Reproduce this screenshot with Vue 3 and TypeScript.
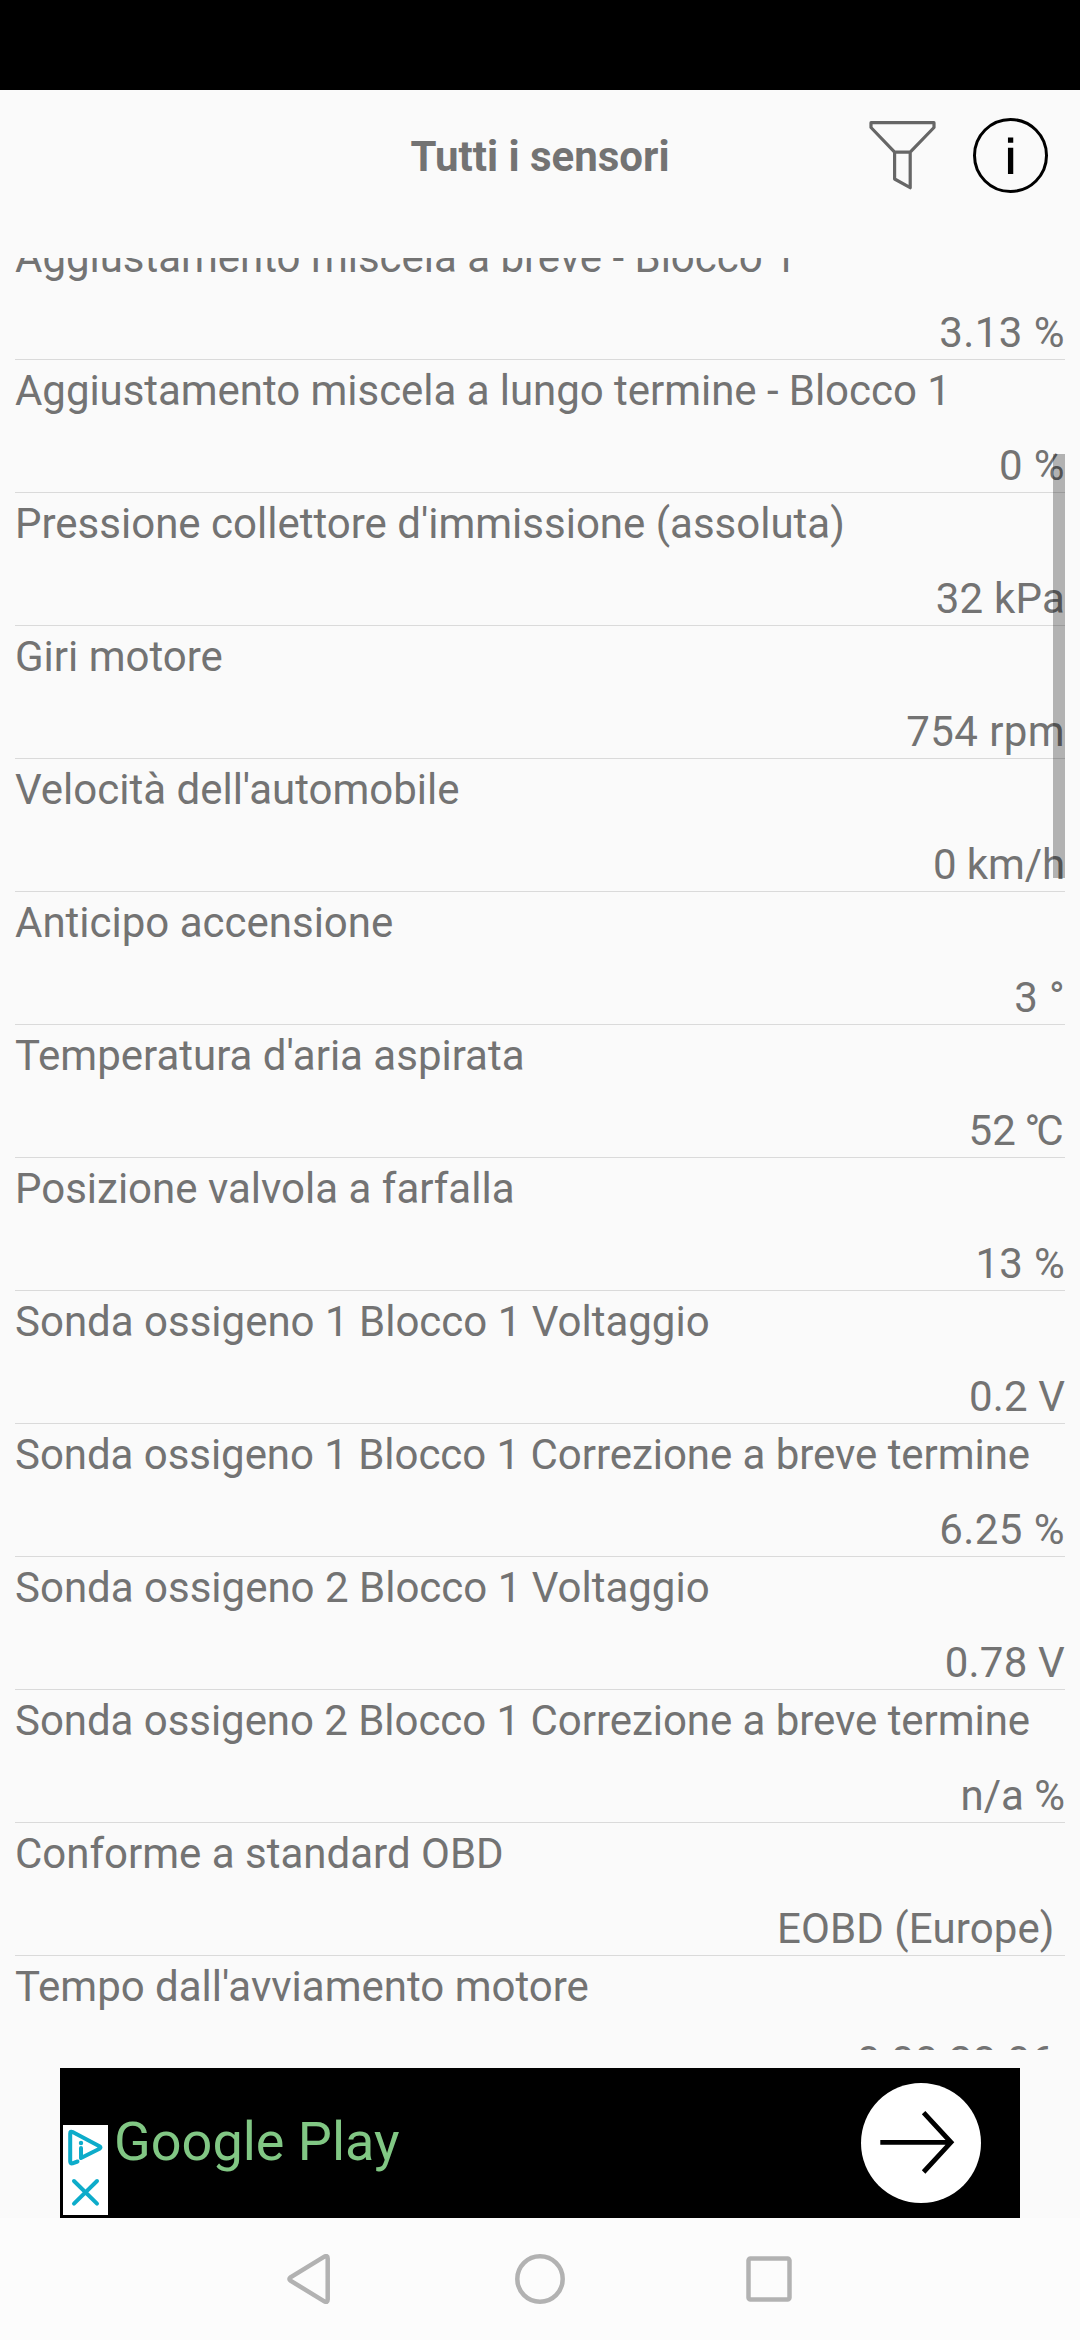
<script setup lang="ts">
interface Sensor {
  name: string
  value: string
  unit?: 'celsius'
  nameTracking?: number
  valueTracking?: number
}

const sensors: Sensor[] = [
  { name: 'Aggiustamento miscela a breve - Blocco 1', value: '3.13 %', nameTracking: -0.02, valueTracking: 0.45 },
  { name: 'Aggiustamento miscela a lungo termine - Blocco 1', value: '0 %', nameTracking: -0.045, valueTracking: 0.4 },
  { name: "Pressione collettore d'immissione (assoluta)", value: '32 kPa', valueTracking: 0.2 },
  { name: 'Giri motore', value: '754 rpm', valueTracking: 0.4 },
  { name: "Velocità dell'automobile", value: '0 km/h', valueTracking: -0.1 },
  { name: 'Anticipo accensione', value: '3 °', valueTracking: 0.35 },
  { name: "Temperatura d'aria aspirata", value: '52 ', unit: 'celsius' },
  { name: 'Posizione valvola a farfalla', value: '13 %', valueTracking: 0.3 },
  { name: 'Sonda ossigeno 1 Blocco 1 Voltaggio', value: '0.2 V', valueTracking: 0.1 },
  { name: 'Sonda ossigeno 1 Blocco 1 Correzione a breve termine', value: '6.25 %', nameTracking: -0.045, valueTracking: 0.45 },
  { name: 'Sonda ossigeno 2 Blocco 1 Voltaggio', value: '0.78 V', valueTracking: 0.2 },
  { name: 'Sonda ossigeno 2 Blocco 1 Correzione a breve termine', value: 'n/a %', nameTracking: -0.045 },
  { name: 'Conforme a standard OBD', value: 'EOBD (Europe) ', valueTracking: 0.1 },
  { name: "Tempo dall'avviamento motore", value: '0:00:28:06 ', valueTracking: 0.2 },
]

const tracking = (px = 0) => ({ letterSpacing: `${px}px` })
</script>

<template>
  <div class="screen">
    <div class="status-bar"></div>
    <header class="header">
      <span></span>
      <h1 class="title">Tutti i sensori</h1>
      <div class="actions">
        <svg class="filter" width="72" height="72" viewBox="0 0 72 72">
          <path d="M4 4.7H67V9.5L43.2 34.2H27.6L4 9.5ZM27.6 34.2V61L43.2 69.7V34.2" />
        </svg>
        <svg class="info" width="76" height="76" viewBox="0 0 76 76">
          <circle cx="38.5" cy="37.5" r="36" />
          <path d="M38.6 29.7V56M38.6 19.5V24.7" />
        </svg>
      </div>
    </header>

    <main class="list">
      <div class="rows">
        <div v-for="s in sensors" :key="s.name" class="row">
          <div class="name" :style="tracking(s.nameTracking)">{{ s.name }}</div>
          <div class="value" :style="tracking(s.valueTracking)">{{ s.value }}<span v-if="s.unit === 'celsius'" class="celsius"><span class="degree">°</span>C</span></div>
        </div>
      </div>
      <div class="scrollbar"></div>
    </main>

    <div class="ad-slot">
      <div class="ad">
        <div class="ad-choices">
          <svg width="45" height="45" viewBox="0 0 45 45">
            <path d="M14.5 36.5L9.5 38.3Q7.2 38.8 7.2 36.5V8.5Q7.2 5.8 9.6 7L36.5 21.3Q38.5 22.5 36.5 23.7L18 33V23" />
            <circle cx="18" cy="18" r="2.2" />
          </svg>
          <svg width="45" height="45" viewBox="0 0 45 45">
            <path d="M11 11L34 33.7M34 11L11 33.7" />
          </svg>
        </div>
        <span class="ad-text">Google Play</span>
        <div class="ad-go">
          <svg width="120" height="120" viewBox="0 0 120 120">
            <path d="M19.3 59.3H90M62.6 29.7L90 59.3L62.6 89" />
          </svg>
        </div>
      </div>
    </div>

    <nav class="nav">
      <svg width="50" height="50" viewBox="0 0 50 50">
        <path d="M38.3 2.7Q41.7 0.9 41.7 4.5V45.5Q41.7 49.1 38.3 47.3L4.5 26.7Q2.3 25 4.5 23.3Z" />
      </svg>
      <svg width="50" height="50" viewBox="0 0 50 50"><circle cx="25" cy="25" r="22.7" /></svg>
      <svg width="50" height="50" viewBox="0 0 50 50"><rect x="4.5" y="4.5" width="41" height="41" rx="2" /></svg>
    </nav>
  </div>
</template>

<style>
body {
  margin: 0;
}
</style>

<style scoped>
.screen {
  display: flex;
  flex-direction: column;
  width: 1080px;
  height: 2340px;
  overflow: hidden;
  background: #fafafa;
  color: #737373;
  font-family: Roboto, sans-serif;
  font-size: 42px;
}
.status-bar {
  flex: none;
  height: 90px;
  background: #000;
}
.header {
  flex: none;
  display: grid;
  grid-template-columns: 1fr auto 1fr;
  align-items: center;
  height: 168px;
  box-sizing: border-box;
  padding: 0 32px 36px;
}
.title {
  margin: 2px 0 0;
  font-size: 42px;
  line-height: 50px;
  font-weight: 700;
}
.actions {
  display: flex;
  justify-content: flex-end;
  gap: 33px;
}
.actions svg {
  fill: none;
}
.filter {
  stroke: #666;
  stroke-width: 3.2;
  stroke-linejoin: round;
}
.info {
  stroke: #000;
  stroke-width: 3;
}
.info path {
  stroke-width: 5.3;
}
.list {
  flex: none;
  position: relative;
  height: 1792px;
  margin: 0 15px;
  overflow: hidden;
}
.rows {
  margin-top: -31px;
}
.row {
  display: flex;
  flex-direction: column;
  justify-content: space-between;
  height: 133px;
  box-sizing: border-box;
  padding: 6px 0 1px;
  border-bottom: 1px solid #dadada;
  white-space: pre;
  line-height: 50px;
}
.value {
  align-self: flex-end;
}
.celsius {
  margin: 0 1.5px 0 -1.8px;
}
.degree {
  letter-spacing: -4px;
}
.scrollbar {
  position: absolute;
  top: 196px;
  right: 0;
  width: 12px;
  height: 424px;
  background: rgba(0, 0, 0, 0.285);
}
.ad-slot {
  flex: none;
  height: 168px;
  box-sizing: border-box;
  padding: 18px 60px 0;
}
.ad {
  display: flex;
  align-items: center;
  height: 150px;
  box-sizing: border-box;
  padding: 0 39px 0 3px;
  background: #000;
}
.ad-choices {
  align-self: flex-end;
  display: flex;
  flex-direction: column;
  width: 45px;
  height: 90px;
  margin-bottom: 3px;
  background: #fff;
}
.ad-choices svg {
  display: block;
  fill: none;
  stroke: #0dacca;
  stroke-width: 4;
  stroke-linecap: round;
  stroke-linejoin: round;
}
.ad-choices circle {
  fill: #0dacca;
  stroke: none;
}
.ad-text {
  margin: 0 0 2px 6px;
  color: #81c784;
  font-size: 54px;
  line-height: 64px;
}
.ad-go {
  width: 120px;
  height: 120px;
  margin-left: auto;
  border-radius: 50%;
  background: #fff;
}
.ad-go svg {
  display: block;
  fill: none;
  stroke: #000;
  stroke-width: 4.8;
}
.nav {
  flex: 1;
  display: flex;
  justify-content: center;
  gap: 179px;
  padding-top: 36px;
  background: #fcfcfc;
}
.nav svg {
  fill: none;
  stroke: #b2b2b2;
  stroke-width: 4.5;
}
</style>
